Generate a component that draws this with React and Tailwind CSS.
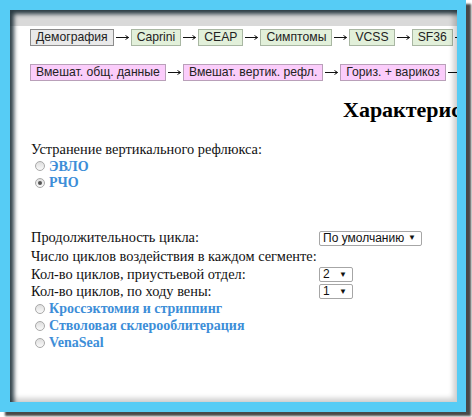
import React from "react";

const stepsTop = [
  { label: "Демография", kind: "grey" },
  { label: "Caprini", kind: "green" },
  { label: "CEAP", kind: "green" },
  { label: "Симптомы", kind: "green" },
  { label: "VCSS", kind: "green" },
  { label: "SF36", kind: "green" },
  { label: "Итог", kind: "green" }
];

const stepsBottom = [
  { label: "Вмешат. общ. данные", kind: "pink" },
  { label: "Вмешат. вертик. рефл.", kind: "pink" },
  { label: "Гориз. + варикоз", kind: "pink" },
  { label: "Вмешат. прочее", kind: "pink" }
];

const boxStyles = {
  grey: "bg-[#e9e9e9] border-[#8c8c8c]",
  green: "bg-[#e2f0da] border-[#a9b7a3]",
  pink: "bg-[#fbcdfb] border-[#b9a0b9]"
};

function Arrow() {
  return (
    <span className="flex w-[17px] shrink-0 pl-[2px]">
      <svg width="13" height="9" viewBox="0 0 13 9">
        <path d="M0 4.5H12.5" stroke="#111" strokeWidth="1" />
        <path d="M9.5 2.5L12.6 4.5L9.5 6.5" stroke="#111" strokeWidth="1" fill="none" />
      </svg>
    </span>
  );
}

function StepRow({ steps }) {
  return (
    <div className="flex items-center whitespace-nowrap font-['Liberation_Sans',Arial,sans-serif]">
      {steps.map((s, i) => (
        <React.Fragment key={s.label}>
          {i > 0 && <Arrow />}
          <span
            className={`shrink-0 h-[17px] px-[5px] border text-[12.2px] leading-[15px] text-[#222] ${boxStyles[s.kind]}`}
          >
            {s.label}
          </span>
        </React.Fragment>
      ))}
    </div>
  );
}

function Radio({ checked, label, h }) {
  return (
    <div className={`flex items-center whitespace-nowrap ${h}`}>
      <span className="ml-[4px] mr-[4px] w-[10px] h-[10px] rounded-full border border-[#a8a8a8] bg-[linear-gradient(#dedede,#fafafa)] flex items-center justify-center">
        {checked && <span className="w-[4px] h-[4px] rounded-full bg-[#555]" />}
      </span>
      <span className="text-[14px] font-bold text-[#3d8ed8] leading-[17px]">{label}</span>
    </div>
  );
}

function Select({ value, w }) {
  return (
    <div
      className={`flex items-center justify-between whitespace-nowrap h-[15px] ${w} border border-[#a6a6a6] rounded-[2px] bg-white pl-[3px] pr-[5px] font-['Liberation_Sans',Arial,sans-serif] text-[12px] leading-[13px] text-[#111]`}
    >
      <span>{value}</span>
      <span className="text-[8px] leading-[8px]">▼</span>
    </div>
  );
}

export default function App() {
  return (
    <div className="w-[472px] h-[417px] bg-white overflow-hidden">
      <div className="w-[466px] h-[412px] bg-[#56ccf5] pt-[10px] pl-[10px] shadow-[5px_4px_2px_rgba(40,40,40,0.85)]">
        <div className="relative w-[447px] h-[392px] overflow-hidden bg-[linear-gradient(to_bottom,#d9d9d9_0px,#d9d9d9_16px,#ffffff_16px)] font-['Liberation_Serif','Times_New_Roman',serif] text-[14.4px] text-[#111]">
          <div className="pl-[20px] pt-[19px]">
            <StepRow steps={stepsTop} />
            <div className="mt-[18px]">
              <StepRow steps={stepsBottom} />
            </div>
          </div>

          <h2 className="mt-[15px] pl-[333px] whitespace-nowrap text-[22px] leading-[28px] font-bold text-black">
            Характеристики процедуры
          </h2>

          <div className="pl-[21px] mt-[17px]">
            <div className="h-[17px] leading-[17px]">Устранение вертикального рефлюкса:</div>
            <Radio label="ЭВЛО" h="h-[16px]" />
            <Radio label="РЧО" checked h="h-[17px]" />

            <div className="mt-[37px] w-[400px]">
              <div className="flex items-center h-[20px]">
                <span className="w-[288px]">Продолжительность цикла:</span>
                <Select value="По умолчанию" w="w-[103px]" />
              </div>
              <div className="flex items-center h-[18px] whitespace-nowrap">
                Число циклов воздействия в каждом сегменте:
              </div>
              <div className="flex items-center h-[17px]">
                <span className="w-[288px]">Кол-во циклов, приустьевой отдел:</span>
                <Select value="2" w="w-[34px]" />
              </div>
              <div className="flex items-center h-[17px]">
                <span className="w-[288px]">Кол-во циклов, по ходу вены:</span>
                <Select value="1" w="w-[34px]" />
              </div>
            </div>
            <Radio label="Кроссэктомия и стриппинг" h="h-[17px]" />
            <Radio label="Стволовая склерооблитерация" h="h-[17px]" />
            <Radio label="VenaSeal" h="h-[17px]" />
          </div>

          <div className="pointer-events-none absolute inset-0 shadow-[inset_4px_4px_4px_rgba(10,30,40,0.85),inset_-4px_-4px_5px_rgba(0,0,0,0.18)]" />
        </div>
      </div>
    </div>
  );
}
